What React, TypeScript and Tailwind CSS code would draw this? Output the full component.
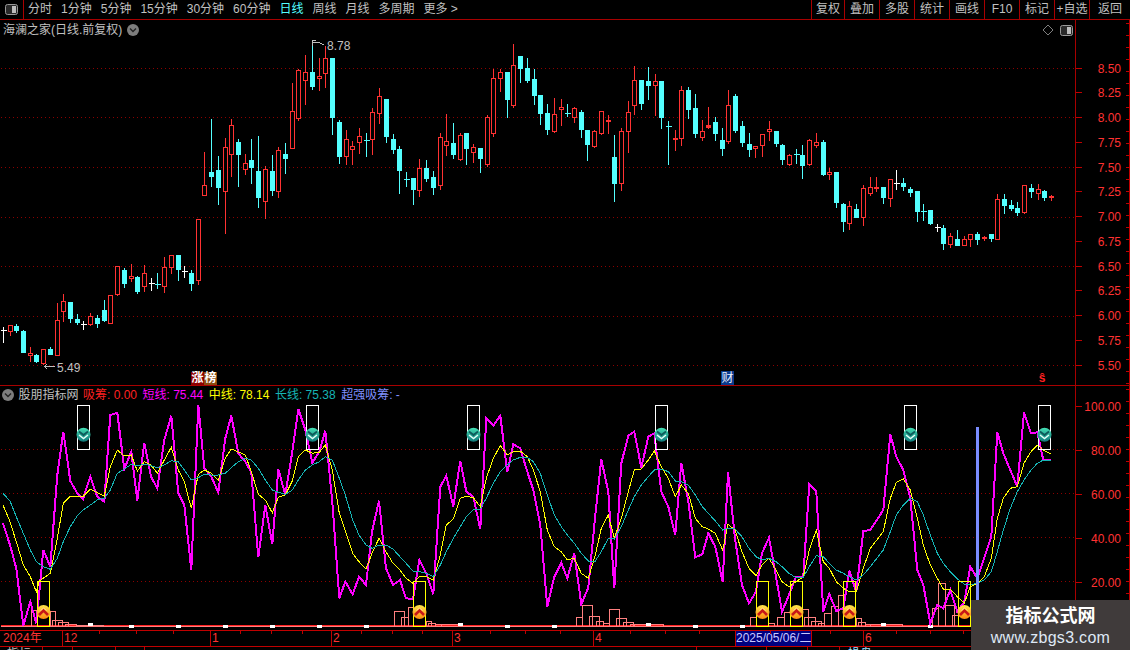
import React from "react";

type K = "r" | "c" | "w" | "f";
type C = [number, number, number, number, number, K];
type G = { ox: number; oy: number; items: C[] };

const groups: G[] = [
  { ox: 0, oy: 180, items: [
    [9,438,450,450,488,"w"],[31,435,436,455,467,"r"],[49,430,438,450,458,"c"],[70,448,453,518,518,"c"],[91,498,520,527,543,"r"],
    [109,520,526,545,548,"c"],[130,508,508,551,552,"r"],[151,498,507,522,524,"c"],[172,366,421,527,527,"r"],[190,339,364,395,423,"r"],
    [211,366,366,414,426,"c"],[232,399,417,426,432,"c"],[249,420,432,432,447,"w"],[271,396,409,434,435,"r"],[292,402,414,429,441,"c"],
    [313,357,390,420,423,"c"],[331,343,346,431,431,"r"],[352,256,259,344,346,"r"],[373,262,270,309,321,"c"],[394,249,289,296,303,"r"],
    [412,285,291,333,339,"c"],[433,252,280,320,333,"r"],[453,291,311,311,330,"w"],[472,276,312,312,324,"c"],[493,228,262,320,336,"r"],
    [514,222,226,263,279,"r"],[535,222,225,267,300,"c"],[553,255,273,273,291,"w"],[574,267,279,309,330,"c"],[595,118,118,302,312,"r"],
  ]},
  { ox: 190, oy: 30, items: [
    [43,363,466,497,497,"r"],[64,264,426,438,468,"c"],[85,375,420,471,522,"c"],[106,321,352,485,609,"r"],[124,264,286,374,438,"r"],
    [145,324,336,372,468,"c"],[166,369,400,419,432,"r"],[184,324,390,411,459,"c"],[205,315,423,501,531,"c"],[226,405,418,513,564,"r"],
    [247,372,423,480,495,"c"],[265,348,361,483,501,"r"],[286,336,372,384,429,"c"],[307,156,244,356,356,"r"],[325,114,121,265,270,"r"],
    [346,72,127,152,222,"r"],[367,35,126,168,177,"c"],[388,81,138,146,180,"r"],[406,45,85,131,171,"r"],[427,84,84,261,312,"c"],
    [448,267,276,378,399,"c"],[469,297,328,380,402,"r"],[487,330,349,359,402,"r"],[508,291,319,338,370,"r"],[529,306,331,331,378,"c"],
    [547,231,247,328,372,"r"],[568,171,199,251,279,"r"],[589,207,207,318,336,"c"],[610,309,327,357,369,"c"],[628,345,357,420,489,"c"],
    [649,423,449,449,468,"c"],[670,444,444,477,522,"c"],[688,384,415,482,498,"r"],[709,387,414,444,453,"c"],[730,420,441,471,492,"c"],
    [751,306,322,467,477,"r"],[769,249,334,347,376,"r"],[790,276,339,372,384,"c"],[811,306,316,389,390,"r"],[829,306,309,354,402,"c"],
    [850,339,352,368,396,"r"],[871,351,354,384,426,"c"],[892,252,262,402,408,"r"],
  ]},
  { ox: 480, oy: 30, items: [
    [40,114,145,311,320,"r"],[61,114,127,146,183,"r"],[82,126,126,207,261,"c"],[100,39,106,227,231,"r"],[121,78,78,114,156,"c"],
    [142,81,114,150,156,"c"],[163,114,147,195,222,"c"],[181,192,195,249,282,"c"],[202,219,249,297,312,"c"],[223,201,253,305,306,"r"],
    [244,204,232,239,285,"r"],[262,219,251,251,258,"c"],[283,228,235,263,276,"r"],[304,237,246,297,321,"c"],[322,300,300,342,390,"c"],
    [343,297,304,350,351,"r"],[364,244,244,311,312,"r"],[385,252,270,275,309,"f"],[403,312,381,459,513,"c"],[424,291,304,461,480,"r"],
    [445,210,247,305,366,"r"],[463,105,151,227,252,"r"],[484,150,150,219,237,"c"],[505,108,153,165,207,"c"],[526,129,153,167,255,"r"],
    [544,153,153,261,294,"c"],[565,270,289,289,402,"c"],[586,297,324,329,360,"f"],[604,165,181,326,345,"r"],[625,168,180,237,264,"c"],
    [646,189,234,309,321,"c"],[667,267,304,323,330,"r"],[685,228,286,291,294,"f"],[706,258,276,309,330,"c"],[727,291,330,354,375,"c"],
    [745,177,226,335,339,"r"],[766,189,198,300,306,"c"],[787,270,288,336,348,"c"],[808,306,342,357,378,"c"],[826,348,349,356,381,"r"],
    [847,312,313,347,378,"r"],[868,270,298,305,330,"r"],[889,303,303,339,348,"c"],
  ]},
  { ox: 770, oy: 120, items: [
    [37,69,75,117,132,"c"],[58,99,106,132,135,"r"],[79,84,103,103,129,"c"],[97,72,105,135,174,"c"],[118,54,61,134,135,"r"],
    [139,36,67,77,81,"r"],[160,57,66,162,165,"c"],[178,141,157,164,177,"r"],[199,153,156,246,261,"c"],[220,246,252,303,333,"c"],
    [238,240,259,311,327,"r"],[259,249,267,291,291,"c"],[280,192,205,293,315,"r"],[301,168,202,219,225,"r"],[319,168,201,206,213,"f"],
    [340,201,201,231,249,"c"],[361,177,178,236,258,"r"],[379,147,190,190,207,"w"],[400,171,189,198,210,"c"],[421,198,207,216,228,"c"],
    [442,213,213,273,303,"c"],[460,249,274,274,300,"c"],[481,270,270,309,312,"c"],[502,309,321,321,333,"w"],[520,312,324,369,387,"c"],
    [541,336,348,372,381,"r"],[562,327,357,375,375,"c"],[583,345,358,375,375,"r"],[601,339,342,357,378,"r"],[622,333,342,357,372,"c"],
    [643,345,351,355,360,"f"],[664,342,342,354,363,"c"],[682,219,238,357,357,"r"],[703,219,237,255,279,"c"],[724,237,255,264,270,"c"],
    [742,243,264,276,285,"c"],[763,192,196,278,279,"r"],[784,189,204,213,231,"c"],[805,189,207,221,237,"r"],[823,207,213,231,240,"c"],
    [844,222,229,233,240,"f"],
  ]},
];

const pts = (ox: number, oy: number, s: string) =>
  s.trim().split(/\s+/).map((p) => {
    const [x, y] = p.split(",").map(Number);
    return `${(ox + x / 3).toFixed(1)},${(oy + y / 3).toFixed(1)}`;
  }).join(" ");

const magenta = [
  pts(0, 395, "9,385 30,450 49,520 70,692 91,620 109,685 130,465 151,515 172,240 190,110 211,258 232,295 249,312 271,245 292,305 313,320 331,60 352,53 373,222 394,170 412,317 433,143 453,245 472,280 493,135 514,62 535,295 553,330 574,525 595,30 613,220 634,245 655,292 676,130 694,62 715,175 736,200 754,232 775,487 796,330 817,448 835,222 856,300 877,170 895,42 916,105 937,203 958,170 976,107 997,320 1018,610 1036,560"),
  pts(350, 395, "8,598 27,545 48,570 66,410 87,317 108,520 129,570 150,555 168,610 189,612 208,495 229,535 250,598 271,275 289,242 310,335 331,197 349,290 370,305 391,403 409,70 430,92 451,62 472,232 490,148 511,160 532,230 550,285 571,390 592,635 613,545 634,503 652,550 673,475 694,628 715,578 736,360 754,193 775,290 793,580 814,205 835,122 853,110 874,218 895,125 913,115 934,290 955,335 976,420 994,203 1015,320 1036,487 1057,478 1075,415 1096,455"),
  pts(720, 395, "8,562 24,232 45,430 66,570 87,625 108,590 126,475 147,428 168,545 186,650 207,600 228,545 250,545 268,268 289,290 310,650 328,597 349,648 370,640 388,527 409,590 430,408 451,405 490,345 511,118 529,185 550,225 571,310 592,525 610,570 631,685 652,630 670,640 691,585 712,650 733,620 751,515 772,550 814,425 832,112 850,175 892,275 912,52 933,115 952,112 970,195 994,195"),
].join(" ");

const yellow = [
  pts(0, 395, "9,330 30,380 49,440 70,510 91,545 109,590 118,558 151,535 172,430 190,325 211,303 249,305 271,282 292,293 313,303 331,215 352,165 373,183 394,180 412,228 433,200 453,210 472,235 493,195 514,157 535,225 553,260 574,340 595,238 613,225 634,235 655,255 676,190 694,162 736,180 754,230 775,298 796,315 817,353 835,307 856,300 877,258 895,185 916,165 937,175 958,172 976,150 997,225 1018,355"),
  pts(350, 395, "8,475 27,500 48,522 66,475 87,430 108,470 129,505 150,525 168,550 189,565 208,545 229,545 250,555 271,480 289,390 310,372 331,310 349,303 370,308 391,335 409,250 430,190 451,152 472,180 490,170 511,168 532,185 550,225 571,290 592,405 613,455 634,470 652,495 673,490 694,535 715,550 736,480 754,400 775,360 793,430 814,370 835,290 853,225 874,222 895,195 913,168 934,215 955,250 976,305 994,270 1015,295 1036,370 1057,395 1075,402 1096,415"),
  pts(720, 395, "8,465 24,388 45,405 66,470 87,520 108,542 126,510 147,490 168,525 186,560 207,575 228,560 250,545 268,465 289,405 310,500 328,520 349,560 370,580 388,590 409,590 430,520 451,460 490,410 511,310 529,262 550,252 571,285 592,370 610,450 631,510 652,550 670,582 691,582 712,605 733,625 751,575 772,565 793,545 814,490 832,370 850,310 871,280 892,275 912,205 933,170 952,150 970,165 994,178"),
].join(" ");

const teal = [
  pts(0, 395, "9,295 30,318 49,365 70,415 91,465 109,500 130,515 151,523 172,490 190,440 211,395 232,362 249,345 271,330 292,315 313,310 331,285 352,235 373,222 394,208 412,213 433,208 453,212 472,218 493,210 514,197 535,200 553,225 574,255 595,248 613,238 634,240 655,240 676,235 694,218 715,200 736,190 754,195 775,220 796,255 817,285 835,292 856,298 877,285 895,255 916,225 937,210 958,200 976,185 997,195 1018,250 1036,300"),
  pts(350, 395, "8,375 27,420 48,450 66,460 87,450 108,450 129,462 150,485 168,505 189,528 208,530 229,535 250,545 271,510 289,470 310,430 331,395 349,365 370,345 391,342 409,310 430,265 451,230 472,210 490,195 511,187 532,187 550,200 571,235 592,300 613,360 634,395 652,420 673,445 694,475 715,498 736,498 754,470 775,430 793,432 814,395 835,345 853,305 874,270 895,245 913,225 934,222 955,230 976,258 994,260 1015,270 1036,300 1057,335 1075,355 1096,378"),
  pts(720, 395, "8,405 24,400 45,402 66,425 87,460 108,485 126,495 147,490 168,500 186,515 207,535 228,548 250,547 268,515 289,482 310,485 328,505 349,525 370,535 388,545 409,555 430,540 451,515 490,465 511,410 529,360 550,330 571,310 592,320 610,360 631,420 652,475 670,505 691,530 712,552 733,567 751,570 772,565 793,555 814,530 832,470 850,405 871,340 892,290 912,255 933,225 952,205 970,195 994,195"),
].join(" ");

const hist: [number, number, number, number][] = [
  [0,94,112,645],[0,150,166,648],[0,157,188,675],[0,175,205,683],[0,196,228,689],[0,228,310,690],
  [0,1183,1213,648],[0,1204,1225,668],[0,1225,1240,637],
  [350,228,245,680],[350,235,257,685],[350,257,275,688],[350,275,335,688],
  [350,680,697,667],[350,697,727,631],[350,718,748,663],[350,739,760,678],[350,760,778,685],[350,778,808,644],[350,799,829,670],[350,820,850,682],[350,841,853,688],[350,853,940,689],
  [720,91,108,667],[720,146,163,685],[720,172,192,667],[720,192,210,652],[720,248,265,643],[720,253,285,667],[720,274,304,680],[720,295,313,685],[720,313,334,655],[720,334,355,633],[720,355,370,601],[720,408,425,670],[720,415,435,682],[720,435,450,687],[720,450,546,689],
  [720,637,655,640],[720,655,676,565],[720,676,703,630],[720,697,715,662],
];

const dashes: [number, number][] = [
  [131,625.5],[178,625.5],[225,625.5],[272,625.5],[319,625.5],[366,625.5],[90,623.5],[460,623.5],[507,625.5],[554,625.5],[648,623.5],[695,625.5],[742,625.5],[883,623.5],[930,625.5],
];

const yellowSignals = [43.5, 419.5, 762.5, 796.5, 849.5, 964.5];
const whiteSignals = [83.5, 312.5, 473.5, 661.5, 910.5, 1044.5];

const upperAxis = ["8.50","8.25","8.00","7.75","7.50","7.25","7.00","6.75","6.50","6.25","6.00","5.75","5.50"];
const lowerAxis = ["100.00","80.00","60.00","40.00","20.00"];
const tabs = ["分时","1分钟","5分钟","15分钟","30分钟","60分钟","日线","周线","月线","多周期","更多 >"];
const tools: [string, string][] = [
  ["复权","w-[33px]"],["叠加","w-[35px]"],["多股","w-[35px]"],["统计","w-[35px]"],["画线","w-[35px]"],["F10","w-[35px]"],["标记","w-[35px]"],["+自选","w-[35px]"],["返回","w-[41px]"],
];
const axisTicks = [99,136,173,240,271,302,361,392,422,490,525,560,630,665,699,770,830,896,930,963];

function Candle({ ox, oy, c }: { ox: number; oy: number; c: C }) {
  const [cx, hi, top, bot, lo, k] = c;
  const x = Math.floor(ox + cx / 3) + 0.5;
  const yy = (v: number) => Math.floor(oy + v / 3) + 0.5;
  const color = k === "c" ? "#54ffff" : k === "w" ? "#ffffff" : "#ff3232";
  const t = yy(top), b = yy(bot), h = yy(hi), l = yy(lo);
  if (t === b) {
    return (
      <g stroke={color}>
        <line x1={x} x2={x} y1={h} y2={l} />
        <line x1={x - 3} x2={x + 3} y1={t} y2={t} />
      </g>
    );
  }
  if (k === "c" || k === "f") {
    return (
      <g>
        <line x1={x} x2={x} y1={h} y2={l} stroke={color} />
        <rect x={x - 2.5} y={t - 0.5} width={5} height={b - t + 1} fill={color} />
      </g>
    );
  }
  return (
    <g stroke={color} fill="#000">
      <line x1={x} x2={x} y1={h} y2={t} />
      <line x1={x} x2={x} y1={b} y2={l} />
      <rect x={x - 2} y={t} width={4} height={b - t} />
    </g>
  );
}

function Grid({ ys }: { ys: number[] }) {
  return (
    <g stroke="#8c0000" strokeDasharray="1 3">
      {ys.map((y) => (
        <line key={y} x1={1} x2={1075} y1={y} y2={y} />
      ))}
    </g>
  );
}

function ToggleIcon() {
  return (
    <svg width="13" height="11" viewBox="0 0 13 11" className="block">
      <rect x="0.5" y="0.5" width="12" height="10" rx="2" fill="#2a2a2a" stroke="#999" />
      <rect x="7" y="2" width="4" height="7" fill="#bdbdbd" />
    </svg>
  );
}

function RoundArrow() {
  return (
    <svg width="12" height="12" viewBox="0 0 12 12" className="block shrink-0">
      <circle cx="6" cy="6" r="6" fill="#7d7d7d" />
      <polyline points="3,4.5 6,7.5 9,4.5" fill="none" stroke="#222" strokeWidth="1.4" />
    </svg>
  );
}

function Ruler({ h }: { h: number }) {
  const ys: number[] = [];
  for (let y = 3; y < h; y += 12) ys.push(y + 0.5);
  return (
    <svg width="4" height={h} className="block shrink-0">
      <line x1="3.5" x2="3.5" y1="0" y2={h} stroke="#c00000" />
      {ys.map((y) => (
        <line key={y} x1="0" x2="4" y1={y} y2={y} stroke="#c00000" />
      ))}
    </svg>
  );
}

function AxisRow({ label }: { label: string }) {
  return (
    <div className="flex items-center h-[16px]">
      <div className="w-[6px] h-px bg-[#c00000]" />
      <div className="flex-1 text-right pr-[5px] pt-[1px] text-[12px] leading-[16px] text-[#ff3232]">{label}</div>
    </div>
  );
}

export default function App() {
  return (
    <div className="relative w-[1130px] h-[650px] overflow-hidden bg-black flex flex-col [font-family:'Liberation_Sans','Noto_Sans_CJK_SC',sans-serif] text-[#c0c0c0] text-[12px]">
      {/* toolbar */}
      <div className="h-[20px] shrink-0 flex border-b border-[#a80000] leading-[19px]">
        <div className="w-[24px] border-r border-[#a80000] flex items-center justify-center pb-[1px]">
          <ToggleIcon />
        </div>
        <div className="flex gap-[9px] pl-[4px]">
          {tabs.map((t) => (
            <span key={t} className={t === "日线" ? "text-[#54ffff]" : ""}>{t}</span>
          ))}
        </div>
        <div className="ml-auto flex">
          {tools.map(([t, w]) => (
            <div key={t} className={`${w} border-l border-[#a80000] text-center whitespace-nowrap`}>{t}</div>
          ))}
        </div>
      </div>

      {/* upper panel */}
      <div className="h-[366px] shrink-0 flex border-b border-[#a80000]">
        <div className="relative w-[1075px] shrink-0">
          <svg width="1075" height="365" viewBox="0 20 1075 365" className="block" shapeRendering="crispEdges">
            <Grid ys={[68.5, 117.5, 167.5, 217.5, 266.5, 316.5, 365.5]} />
            {groups.map((g) => g.items.map((c, i) => <Candle key={`${g.ox}-${i}`} ox={g.ox} oy={g.oy} c={c} />))}
            <g stroke="#c0c0c0" fill="none">
              <path d="M312.5 45.5V40.5H316M312.5 42.5H319L324 45" />
              <path d="M44 366.5H55M44 366.5L47 364.5M44 366.5L47 368.5" />
            </g>
            <text x="327" y="50" fontSize="12" fill="#c0c0c0">8.78</text>
            <text x="57" y="372" fontSize="12" fill="#c0c0c0">5.49</text>
          </svg>
          <div className="absolute left-[3px] top-[1px] flex items-center gap-[5px] h-[18px]">
            <span>海澜之家(日线.前复权)</span>
            <RoundArrow />
          </div>
          <div className="absolute left-[1042px] top-[4px] flex items-center gap-[6px]">
            <svg width="12" height="12" viewBox="0 0 12 12" className="block">
              <path d="M6 1L11 6L6 11L1 6Z" fill="none" stroke="#808080" />
            </svg>
            <ToggleIcon />
          </div>
          <div className="absolute left-[191px] top-[352px] flex font-bold text-white leading-[13px]">
            <span className="w-[13px] bg-[#8b0000] text-center">涨</span>
            <span className="w-[13px] bg-[#8b4a10] text-center">榜</span>
          </div>
          <div className="absolute left-[721px] top-[351px] w-[13px] bg-[#0a3a8c] text-center text-[#e8f0ff] leading-[14px]">财</div>
          <div className="absolute left-[1037px] top-[351px] w-[10px] text-center font-bold text-[#ff2020] leading-[14px]">ŝ</div>
        </div>
        <div className="flex-1 flex border-l border-[#a80000]">
          <div className="flex-1 flex flex-col gap-[8.75px] pt-[40px]">
            {upperAxis.map((a) => <AxisRow key={a} label={a} />)}
          </div>
          <Ruler h={365} />
        </div>
      </div>

      {/* lower panel */}
      <div className="h-[244px] shrink-0 flex">
        <div className="relative w-[1075px] shrink-0">
          <svg width="1075" height="244" viewBox="0 386 1075 244" className="block" shapeRendering="crispEdges">
            <defs>
              <linearGradient id="gold" x1="0" y1="0" x2="0" y2="1">
                <stop offset="0" stopColor="#ffe54a" />
                <stop offset="1" stopColor="#ff8a10" />
              </linearGradient>
              <linearGradient id="jade" x1="0" y1="0" x2="0" y2="1">
                <stop offset="0" stopColor="#45e0b4" />
                <stop offset="1" stopColor="#107a7c" />
              </linearGradient>
            </defs>
            <Grid ys={[449.5, 493.5, 537.5, 581.5]} />
            <line x1="1" x2="1075" y1="625.5" y2="625.5" stroke="#ff2020" />
            <line x1="1" x2="1075" y1="626.5" y2="626.5" stroke="#ff8080" />
            {hist.map(([ox, a, b, t], i) => {
              const x1 = Math.floor(ox + a / 3) + 0.5;
              const x2 = Math.floor(ox + b / 3) + 0.5;
              const top = Math.floor(395 + t / 3) + 0.5;
              return <path key={i} d={`M${x1} 626V${top}H${x2}V626`} fill="none" stroke="#ff8080" />;
            })}
            {dashes.map(([x, y], i) => (
              <rect key={i} x={x - 2} y={y - 1} width={5} height={3} fill="#fff" />
            ))}
            <polyline points={magenta} fill="none" stroke="#ff00ff" strokeWidth="2" />
            <polyline points={yellow} fill="none" stroke="#ffff00" />
            <polyline points={teal} fill="none" stroke="#16b4b4" />
            <rect x="976" y="427" width="3" height="174" fill="#7a8cff" />
            {yellowSignals.map((x) => (
              <g key={x}>
                <rect x={x - 6} y="581.5" width="12" height="45" fill="none" stroke="#ffff00" />
                <g shapeRendering="auto">
                  <circle cx={x} cy="612" r="7" fill="url(#gold)" />
                  <polyline points={`${x - 4.5},615 ${x},610.5 ${x + 4.5},615`} fill="none" stroke="#c81818" strokeWidth="2.6" />
                  <polyline points={`${x - 3},610.5 ${x},608 ${x + 3},610.5`} fill="none" stroke="#ffd8a0" />
                </g>
              </g>
            ))}
            {whiteSignals.map((x) => (
              <g key={x}>
                <rect x={x - 6} y="405.5" width="12" height="44" fill="none" stroke="#ffffff" />
                <g shapeRendering="auto">
                  <circle cx={x} cy="434.7" r="7" fill="url(#jade)" />
                  <polyline points={`${x - 4.5},431.5 ${x},435 ${x + 4.5},431.5`} fill="none" stroke="#0d5a5a" strokeWidth="1.8" />
                  <polyline points={`${x - 4.5},435 ${x},438.5 ${x + 4.5},435`} fill="none" stroke="#e6fff8" strokeWidth="1.4" />
                </g>
              </g>
            ))}
          </svg>
          <div className="absolute left-[2px] top-0 h-[17px] flex items-center gap-[5.5px] whitespace-nowrap">
            <RoundArrow />
            <span className="-ml-[1px] w-[59px]">股朋指标网</span>
            <span className="text-[#ff2020]">吸筹: 0.00</span>
            <span className="text-[#ff00ff]">短线: 75.44</span>
            <span className="text-[#ffff00]">中线: 78.14</span>
            <span className="text-[#16b4b4]">长线: 75.38</span>
            <span className="text-[#8090ff]">超强吸筹: -</span>
          </div>
        </div>
        <div className="flex-1 flex border-l border-[#a80000]">
          <div className="flex-1 flex flex-col gap-[28px] pt-[12px]">
            {lowerAxis.map((a) => <AxisRow key={a} label={a} />)}
          </div>
          <Ruler h={244} />
        </div>
      </div>

      {/* date axis */}
      <div className="relative h-[17px] shrink-0 flex border-y border-[#c00000] text-[#ff3232] leading-[15px]">
        <div className="w-[62px] pl-[3px] whitespace-nowrap">2024年</div>
        <div className="w-[148px] border-l border-[#c00000] pl-[1px]">12</div>
        <div className="w-[121px] border-l border-[#c00000] pl-[1px]">1</div>
        <div className="w-[121px] border-l border-[#c00000] pl-[1px]">2</div>
        <div className="w-[141px] border-l border-[#c00000] pl-[1px]">3</div>
        <div className="w-[142px] border-l border-[#c00000] pl-[1px]">4</div>
        <div className="w-[77px] bg-[#000080] border-x border-[#c00000] text-[#c8c8ff] text-center whitespace-nowrap">2025/05/06/二</div>
        <div className="w-[51px]" />
        <div className="flex-1 border-l border-[#c00000] pl-[1px]">6</div>
        <svg width="1130" height="4" className="absolute left-0 top-0 block" shapeRendering="crispEdges">
          {axisTicks.map((x) => (
            <line key={x} x1={x + 0.5} x2={x + 0.5} y1="0" y2="3" stroke="#c00000" />
          ))}
        </svg>
      </div>

      {/* bottom tab row, cut by the window edge as in the reference */}
      <div className="flex-1 flex overflow-hidden leading-[15px]">
        <div className="w-[43px] pl-[7px] border-r border-[#c00000]">指标</div>
        <div className="w-[30px] border-r border-[#c00000]" />
        <div className="w-[43px] border-r border-[#c00000]" />
        <div className="w-[29px] border-r border-[#c00000]" />
        <div className="w-[552px] border-r border-[#c00000]" />
        <div className="w-[70px] border-r border-[#c00000]" />
        <div className="w-[41px] border-r border-[#c00000]" />
        <div className="w-[32px] border-r border-[#c00000]" />
        <div className="pl-[8px] text-[#9fe0ff]">操盘</div>
      </div>

      {/* watermark */}
      <div className="absolute right-0 bottom-0 w-[159px] h-[50px] bg-[#403b3b] flex flex-col items-center">
        <div className="mt-[4px] text-[18px] leading-[24px] font-bold text-white">指标公式网</div>
        <div className="text-[16px] leading-[19px] tracking-[0.3px] text-[#dfe8f5]">www.zbgs3.com</div>
      </div>
    </div>
  );
}
